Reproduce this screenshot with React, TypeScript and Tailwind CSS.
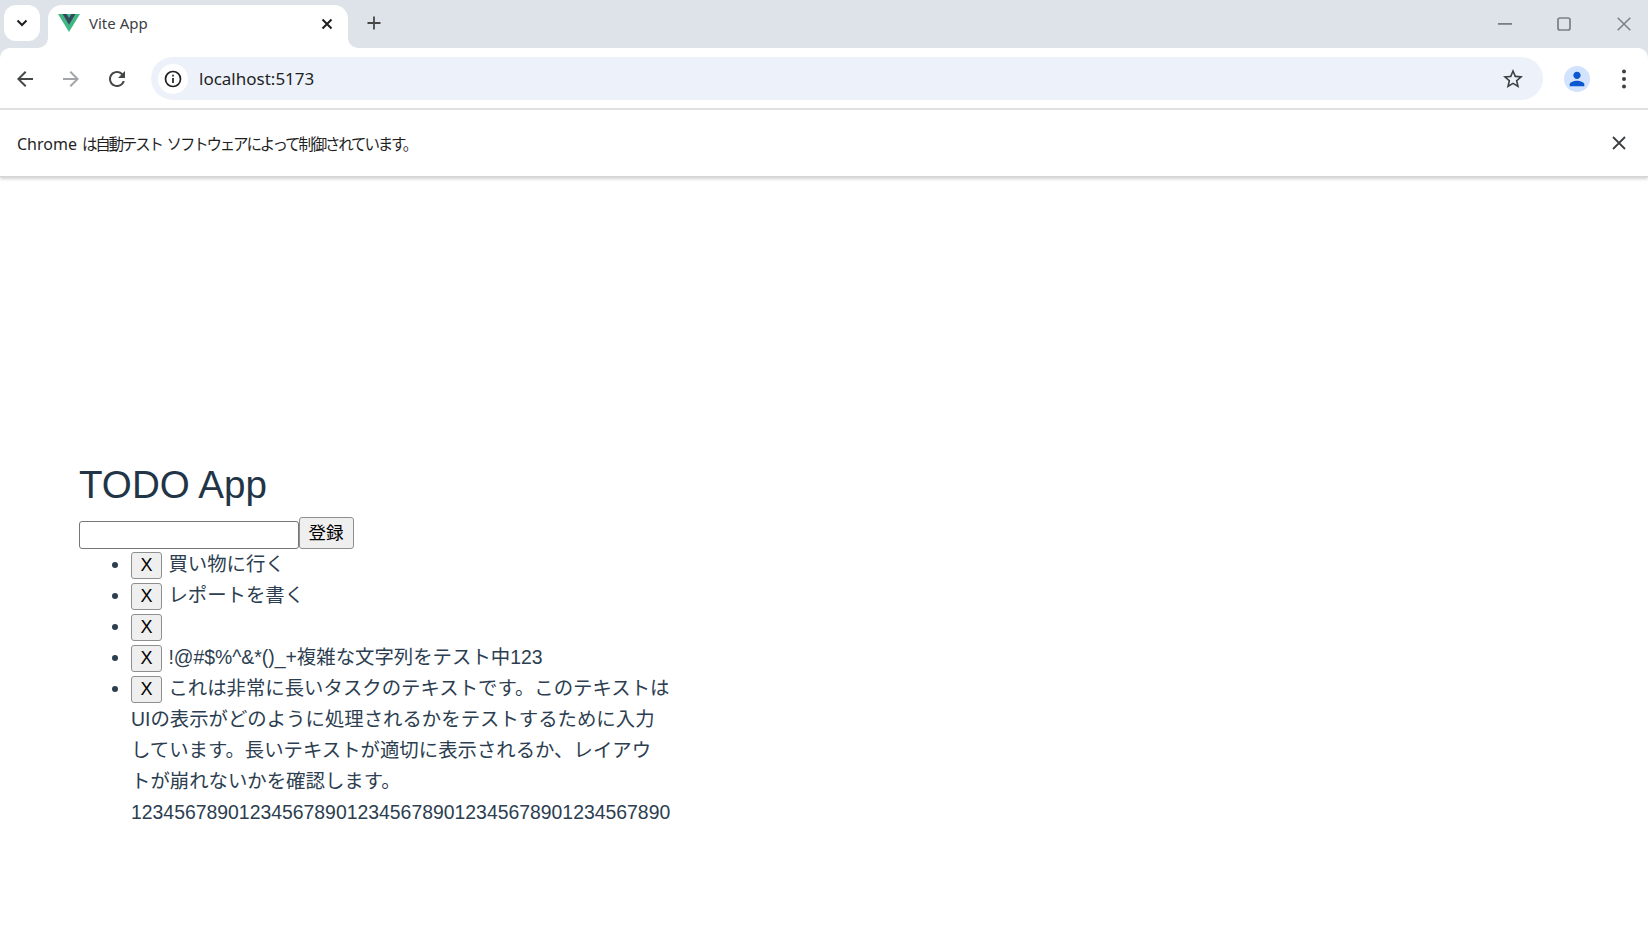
import React from "react";

const ui = { fontFamily: '"Noto Sans", "Noto Sans CJK JP", sans-serif' };
const page = { fontFamily: '"Liberation Sans", "Noto Sans CJK JP", sans-serif' };

function Ico({ size = 24, className = "", children }: { size?: number; className?: string; children: React.ReactNode }) {
  return (
    <svg width={size} height={size} viewBox="0 0 24 24" className={className} fill="currentColor">
      {children}
    </svg>
  );
}

function TabStrip() {
  return (
    <div className="flex h-[48px] bg-[#dee3ea] items-start">
      <div className="mt-[5px] ml-[4px] w-[36px] h-[36px] rounded-[12px] bg-white flex items-center justify-center text-[#1f1f1f]">
        <svg width="12" height="8" viewBox="0 0 12 8" fill="none" stroke="currentColor" strokeWidth="2">
          <path d="M1.5 1.5 6 6l4.5-4.5" />
        </svg>
      </div>
      <div className="relative mt-[5px] ml-[8px] w-[300px] h-[43px] bg-white rounded-t-[14px] flex items-center pl-[10px] pr-[15px] pb-[1px]">
        <svg className="absolute left-[-10px] bottom-0" width="10" height="10" viewBox="0 0 10 10">
          <path d="M10 0v10H0a10 10 0 0 0 10-10z" fill="#fff" />
        </svg>
        <svg className="absolute right-[-10px] bottom-0" width="10" height="10" viewBox="0 0 10 10">
          <path d="M0 0v10h10A10 10 0 0 1 0 0z" fill="#fff" />
        </svg>
        <svg width="22" height="18" viewBox="0 0 22 18" className="mb-[7px]">
          <path d="M0 0h22L11 18z" fill="#41b883" />
          <path d="M4.6 0h4L11 4l2.4-4h4L11 10.8z" fill="#34495e" />
        </svg>
        <span className="ml-[9px] mb-[6px] text-[15px] text-[#3c4043]" style={ui}>Vite App</span>
        <svg className="ml-auto mb-[5px]" width="12" height="12" viewBox="0 0 12 12" fill="none" stroke="#1f1f1f" strokeWidth="2">
          <path d="M1.5 1.5l9 9M10.500 1.500l-9 9" />
        </svg>
      </div>
      <div className="ml-[16px] mt-[13px] w-[20px] h-[20px] flex items-center justify-center text-[#444746]">
        <svg width="14" height="14" viewBox="0 0 14 14" fill="none" stroke="currentColor" strokeWidth="1.800">
          <path d="M7 0.500v13M0.500 7h13" />
        </svg>
      </div>
      <div className="ml-auto flex items-center h-[47px] text-[#7b7f85]">
        <svg width="14" height="2" viewBox="0 0 14 2" className="mr-[45px]">
          <rect width="14" height="1.800" fill="currentColor" />
        </svg>
        <svg width="14" height="14" viewBox="0 0 14 14" fill="none" stroke="currentColor" strokeWidth="1.700" className="mr-[46px]">
          <rect x="1" y="1" width="12" height="12" rx="2" />
        </svg>
        <svg width="14" height="14" viewBox="0 0 14 14" fill="none" stroke="currentColor" strokeWidth="1.500" className="mr-[17px]">
          <path d="M0.700 0.700l12.600 12.600M13.300 0.700 0.700 13.300" />
        </svg>
      </div>
    </div>
  );
}

function Toolbar() {
  return (
    <div className="bg-[#dee3ea]">
      <div className="h-[60px] bg-white rounded-t-[10px] flex items-center text-[#444746] pt-[1px]">
        <Ico className="ml-[13px]">
          <path d="M20 11H7.830l5.590-5.590L12 4l-8 8 8 8 1.410-1.410L7.830 13H20v-2z" />
        </Ico>
        <Ico className="ml-[22px] text-[#a3a5a8]">
          <path d="M12 4l-1.410 1.410L16.170 11H4v2h12.170l-5.580 5.590L12 20l8-8z" />
        </Ico>
        <Ico className="ml-[22px]">
          <path d="M17.650 6.350A7.958 7.958 0 0 0 12 4c-4.420 0-7.990 3.580-7.990 8s3.570 8 7.990 8c3.730 0 6.840-2.550 7.730-6h-2.080A5.990 5.990 0 0 1 12 18c-3.310 0-6-2.690-6-6s2.690-6 6-6c1.660 0 3.140.69 4.220 1.780L13 11h7V4l-2.350 2.350z" />
        </Ico>
        <div className="ml-[22px] h-[43px] w-[1392px] shrink-0 rounded-full bg-[#edf2fa] flex items-center pl-[7px] pr-[18px]">
          <div className="w-[30px] h-[30px] rounded-full bg-white flex items-center justify-center text-[#1f1f1f]">
            <svg width="18" height="18" viewBox="0 0 18 18" fill="none" stroke="currentColor" strokeWidth="1.700">
              <circle cx="9" cy="9" r="7.500" />
              <path d="M9 8v5M9 4.800v1.800" />
            </svg>
          </div>
          <span className="ml-[11px] text-[17px] text-[#1f1f1f]" style={ui}>localhost:5173</span>
          <Ico className="ml-auto text-[#3c4043]">
            <path d="M22 9.240l-7.190-.620L12 2 9.190 8.630 2 9.240l5.460 4.730L5.820 21 12 17.270 18.180 21l-1.630-7.030L22 9.240zM12 15.400l-3.760 2.270 1-4.280-3.320-2.880 4.380-.380L12 6.100l1.710 4.040 4.380.380-3.320 2.880 1 4.280L12 15.400z" />
          </Ico>
        </div>
        <div className="ml-[21px] shrink-0 w-[26px] h-[26px] rounded-full bg-[#d3e3fd] flex items-center justify-center text-[#0b57d0]">
          <Ico size={22}>
            <path d="M12 12c2.210 0 4-1.790 4-4s-1.790-4-4-4-4 1.790-4 4 1.790 4 4 4zm0 2c-2.670 0-8 1.340-8 4v2h16v-2c0-2.660-5.330-4-8-4z" />
          </Ico>
        </div>
        <svg width="6" height="20" viewBox="0 0 6 20" className="ml-[31px] text-[#3c4043]" fill="currentColor">
          <circle cx="3" cy="2.500" r="2" />
          <circle cx="3" cy="10" r="2" />
          <circle cx="3" cy="17.500" r="2" />
        </svg>
      </div>
    </div>
  );
}

function InfoBar() {
  return (
    <div className="h-[69px] border-t-2 border-[#e1e1e1] bg-white flex items-center pl-[17px] pr-[22px] shadow-[0_2px_3px_rgba(0,0,0,0.18)] border-b border-b-[#d6d6d6] relative">
      <span className="text-[15.500px] text-[#1f1f1f] mt-[3px]" style={ui}>
        <span className="text-[16px]">Chrome</span>
        <span className="tracking-[-2.200px] [word-spacing:3px] ml-[5px]">は自動テスト ソフトウェアによって制御されています。</span>
      </span>
      <svg className="ml-auto" width="14" height="14" viewBox="0 0 14 14" fill="none" stroke="#3c4043" strokeWidth="1.800">
        <path d="M1 1l12 12M13 1 1 13" />
      </svg>
    </div>
  );
}

function XButton() {
  return (
    <button className="inline-block h-[27px] w-[31px] mr-[1px] pb-[2px] bg-[#efefef] border border-[#8f8f8f] rounded-[3px] text-[18px] leading-[20px] text-black text-center align-middle">
      X
    </button>
  );
}

const items = [
  "買い物に行く",
  "レポートを書く",
  "",
  "!@#$%^&*()_+複雑な文字列をテスト中123",
  "これは非常に長いタスクのテキストです。このテキストはUIの表示がどのように処理されるかをテストするために入力しています。長いテキストが適切に表示されるか、レイアウトが崩れないかを確認します。12345678901234567890123456789012345678901234567890",
];

export default function App() {
  return (
    <div className="min-h-[928px] bg-white overflow-hidden">
      <TabStrip />
      <Toolbar />
      <InfoBar />
      <main className="pl-[79px] pt-[285px] text-[#2c3e50]" style={page}>
        <h1 className="text-[38.600px] leading-[46px] font-normal text-[#213547]">TODO App</h1>
        <div className="flex items-start h-[32px] mt-[9px]">
          <input className="w-[220px] h-[28px] mt-[4px] bg-white border border-[#767676] rounded-[3px]" />
          <button className="w-[55px] h-[32px] pr-[1px] bg-[#efefef] border border-[#8f8f8f] rounded-[3px] text-[17.500px] text-black">登録</button>
        </div>
        <ul className="list-disc pl-[52px] w-[590.600px] text-[19.400px] leading-[31px]">
          {items.map((t, i) => (
            <li key={i} className="marker:text-[#2c3e50]">
              <XButton /> {t}
            </li>
          ))}
        </ul>
      </main>
    </div>
  );
}
